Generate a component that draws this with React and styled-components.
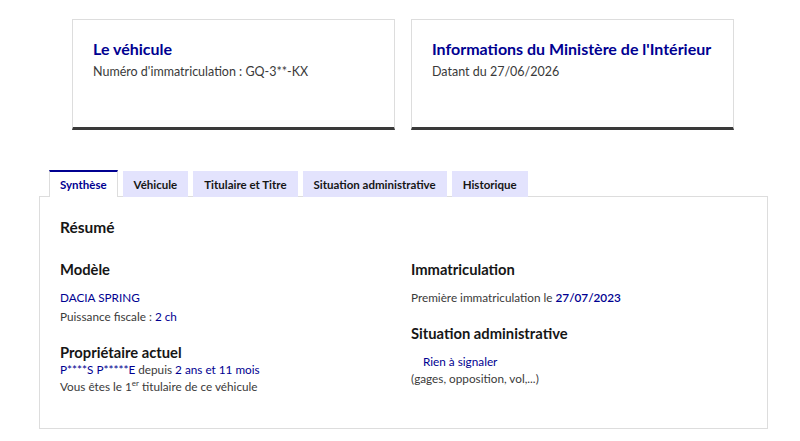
import React from "react";
import styled, { createGlobalStyle, css } from "styled-components";

const GlobalStyle = createGlobalStyle`
  body {
    margin: 0;
    background: #ffffff;
    font-family: "Lato", "Open Sans", sans-serif;
    color: #3a3a3a;
  }
`;

const tabs = ["Synthèse", "Véhicule", "Titulaire et Titre", "Situation administrative", "Historique"];

export default function App() {
  return (
    <Page>
      <GlobalStyle />
      <Cards>
        <Card>
          <CardTitle>Le véhicule</CardTitle>
          <CardText>Numéro d'immatriculation : GQ-3**-KX</CardText>
        </Card>
        <Card>
          <CardTitle>Informations du Ministère de l'Intérieur</CardTitle>
          <CardText>Datant du 27/06/2026</CardText>
        </Card>
      </Cards>

      <TabList>
        {tabs.map((t, i) => (
          <Tab key={t} active={i === 0}>
            {t}
          </Tab>
        ))}
      </TabList>

      <Panel>
        <PanelTitle>Résumé</PanelTitle>
        <Columns>
          <Column>
            <Heading>Modèle</Heading>
            <Line top={11}>
              <Blue>DACIA SPRING</Blue>
            </Line>
            <Line top={3}>
              Puissance fiscale : <Blue>2 ch</Blue>
            </Line>
            <Heading top={17}>Propriétaire actuel</Heading>
            <Line top={0}>
              <Blue>P****S P*****E</Blue> depuis <Blue>2 ans et 11 mois</Blue>
            </Line>
            <Line top={1}>
              Vous êtes le 1<Sup>er</Sup> titulaire de ce véhicule
            </Line>
          </Column>
          <Column>
            <Heading>Immatriculation</Heading>
            <Line top={11}>
              Première immatriculation le <Blue strong>27/07/2023</Blue>
            </Line>
            <Heading top={17}>Situation administrative</Heading>
            <Line top={11} indent>
              <Blue>Rien à signaler</Blue>
            </Line>
            <Line top={1}>
              (gages, opposition, vol,...)
            </Line>
          </Column>
        </Columns>
      </Panel>
    </Page>
  );
}

const Page = styled.div`
  width: 800px;
  padding-top: 19px;
`;

const Cards = styled.div`
  display: flex;
  gap: 16px;
  margin-left: 72px;
`;

const Card = styled.div`
  box-sizing: border-box;
  width: 323px;
  height: 111px;
  border: 1px solid #dddddd;
  border-bottom: 3px solid #3a3a3a;
  padding: 19px 20px 0 20px;
`;

const CardTitle = styled.div`
  font-weight: 700;
  font-size: 16px;
  line-height: 20px;
  color: #000091;
`;

const CardText = styled.div`
  margin-top: 4px;
  font-size: 12.5px;
  line-height: 18px;
  color: #3a3a3a;
`;

const TabList = styled.div`
  display: flex;
  gap: 5px;
  margin-top: 40px;
  margin-left: 49px;
  position: relative;
  z-index: 1;
`;

const Tab = styled.div`
  box-sizing: border-box;
  height: 26px;
  padding: 0 11px;
  display: flex;
  align-items: center;
  font-weight: 700;
  font-size: 11.5px;
  color: #161616;
  background: #e3e3fd;
  margin-top: 1px;

  ${(p) =>
    p.active &&
    css`
      background: #ffffff;
      color: #000091;
      border-top: 2px solid #000091;
      border-left: 1px solid #dddddd;
      border-right: 1px solid #dddddd;
      margin-top: 0;
      height: 27px;
      padding: 0 10px;
    `}
`;

const Panel = styled.div`
  box-sizing: border-box;
  width: 729px;
  height: 233px;
  margin-left: 39px;
  margin-top: -1px;
  border: 1px solid #dddddd;
  padding: 19px 20px 0 20px;
`;

const PanelTitle = styled.div`
  font-weight: 700;
  font-size: 15.5px;
  line-height: 22px;
  color: #161616;
`;

const Columns = styled.div`
  display: grid;
  grid-template-columns: 351px 1fr;
  margin-top: 21px;
`;

const Column = styled.div`
  display: flex;
  flex-direction: column;
`;

const Heading = styled.div`
  font-weight: 700;
  font-size: 14.75px;
  line-height: 20px;
  color: #161616;
  margin-top: ${(p) => p.top || 0}px;
`;

const Line = styled.div`
  font-size: 11.75px;
  line-height: 16px;
  color: #3a3a3a;
  margin-top: ${(p) => p.top || 0}px;
  padding-left: ${(p) => (p.indent ? 12 : 0)}px;
`;

const Blue = styled.span`
  color: #000091;
  ${(p) =>
    p.strong &&
    css`
      font-weight: 600;
    `}
`;

const Sup = styled.sup`
  font-size: 8px;
  line-height: 0;
`;
